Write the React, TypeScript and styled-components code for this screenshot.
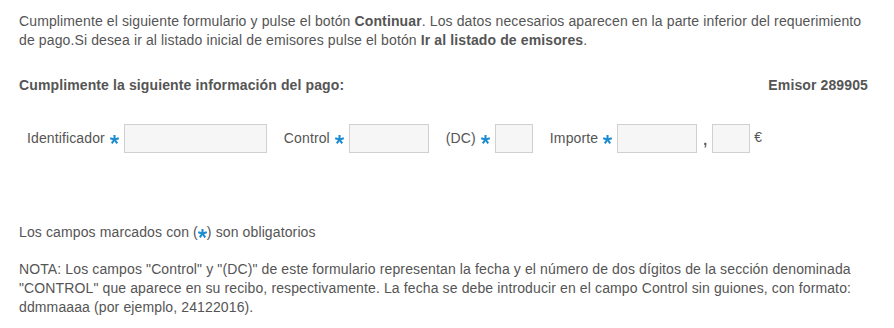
import React, { FC } from 'react'
import styled, { createGlobalStyle } from 'styled-components'

const GlobalStyle = createGlobalStyle`
  body {
    margin: 0;
    background: #fff;
    font-family: Arial, "Liberation Sans", sans-serif;
    font-size: 14px;
    color: #555;
    letter-spacing: 0.12px;
  }
`

const Page = styled.div`
  padding: 12px 26px 0 19px;
  line-height: 18.6px;
`

const Intro = styled.p`
  margin: 0;
`

const Header = styled.div`
  display: flex;
  justify-content: space-between;
  margin-top: 27px;
  font-weight: bold;
`

const FormRow = styled.div`
  display: flex;
  align-items: center;
  margin-top: 29px;
  padding-left: 8px;
`

const Field = styled.div`
  display: flex;
  align-items: center;
  margin-right: 17px;
`

const Label = styled.label`
  display: flex;
  align-items: center;
  gap: 5px;
  margin-right: 5px;
`

const StarIcon = styled.svg<{ $inline?: boolean }>`
  width: 9px;
  height: 9px;
  flex: none;
  vertical-align: ${(p) => (p.$inline ? '-1px' : 'middle')};
  margin-top: 2px;
`

const Star: FC<{ inline?: boolean }> = ({ inline }) => (
  <StarIcon viewBox="0 0 10 10" $inline={inline}>
    <g stroke="#1a8bd0" strokeWidth="2.3" strokeLinecap="butt">
      <line x1="5" y1="5" x2="5" y2="0" />
      <line x1="5" y1="5" x2="9.8" y2="3.5" />
      <line x1="5" y1="5" x2="8" y2="9.3" />
      <line x1="5" y1="5" x2="2" y2="9.3" />
      <line x1="5" y1="5" x2="0.2" y2="3.5" />
    </g>
  </StarIcon>
)

const Input = styled.input<{ $w: number }>`
  box-sizing: border-box;
  width: ${(p) => p.$w}px;
  height: 29px;
  border: 1px solid #d0d0d0;
  background: #f6f6f6;
  padding: 0 4px;
  font: inherit;
  outline: none;
`

const Comma = styled.span`
  margin: 0 5px 0 6px;
  font-weight: bold;
  position: relative;
  top: 2px;
`

const Euro = styled.span`
  margin-left: 4px;
  position: relative;
  top: -1px;
`

const Required = styled.p`
  margin: 70px 0 0;
`

const Note = styled.p`
  margin: 19px 0 0;
`

type FieldProps = {
  label: string
  width: number
}

const FormField: FC<FieldProps> = ({ label, width }) => (
  <Field>
    <Label>
      {label}
      <Star />
    </Label>
    <Input $w={width} />
  </Field>
)

export default function App() {
  return (
    <>
      <GlobalStyle />
      <Page>
        <Intro>
          Cumplimente el siguiente formulario y pulse el botón <b>Continuar</b>. Los datos necesarios aparecen en la parte inferior del requerimiento de pago.Si desea ir al listado inicial de emisores pulse el botón <b>Ir al listado de emisores</b>.
        </Intro>
        <Header>
          <span>Cumplimente la siguiente información del pago:</span>
          <span>Emisor 289905</span>
        </Header>
        <FormRow>
          <FormField label="Identificador" width={143} />
          <FormField label="Control" width={80} />
          <FormField label="(DC)" width={38} />
          <Field>
            <Label>
              Importe
              <Star />
            </Label>
            <Input $w={80} />
            <Comma>,</Comma>
            <Input $w={38} />
            <Euro>€</Euro>
          </Field>
        </FormRow>
        <Required>
          Los campos marcados con (<Star inline />) son obligatorios
        </Required>
        <Note>
          NOTA: Los campos "Control" y "(DC)" de este formulario representan la fecha y el número de dos dígitos de la sección denominada "CONTROL" que aparece en su recibo, respectivamente. La fecha se debe introducir en el campo Control sin guiones, con formato: ddmmaaaa (por ejemplo, 24122016).
        </Note>
      </Page>
    </>
  )
}
